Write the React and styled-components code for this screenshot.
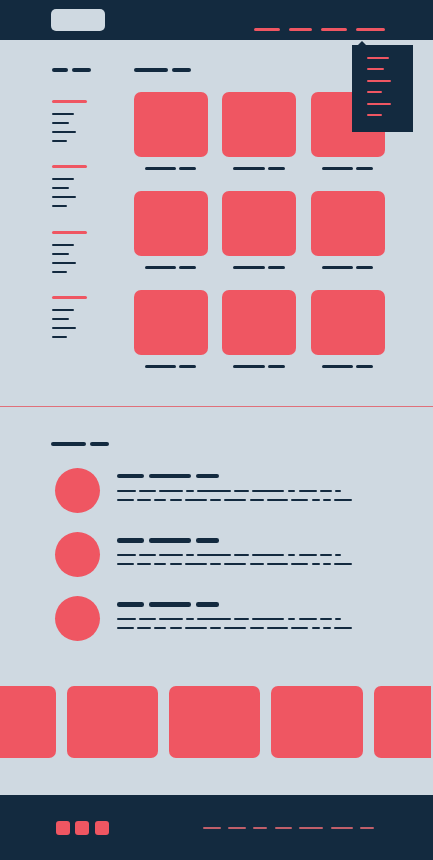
import React from 'react';
import styled, { createGlobalStyle } from 'styled-components';

// Palette
const NAVY = '#132a3f';
const CORAL = '#ef5662';
const PAPER = '#cfd9e1';
const MUTED = '#c05f6a';

const GlobalStyle = createGlobalStyle`
  html, body {
    margin: 0;
    padding: 0;
    background: ${PAPER};
  }
  body {
    font-family: "Liberation Sans", Arial, sans-serif;
  }
`;

const Page = styled.div`
  position: relative;
  width: 433px;
  height: 860px;
  overflow: hidden;
  background: ${PAPER};
`;

// A placeholder stroke: every "text" in this wireframe is one of these
const Bar = styled.span`
  display: block;
  flex: none;
  width: ${({ $w }) => $w}px;
  height: ${({ $h = 2 }) => $h}px;
  border-radius: ${({ $h = 2 }) => $h / 2}px;
  background: ${({ $color = NAVY }) => $color};
`;

const Dashes = styled.div`
  display: flex;
  gap: ${({ $gap = 4 }) => $gap}px;
`;

// Header
const Header = styled.header`
  display: flex;
  align-items: flex-start;
  box-sizing: border-box;
  height: 40px;
  padding: 0 48px 0 51px;
  background: ${NAVY};
`;

const Logo = styled.div`
  width: 54px;
  height: 22px;
  margin-top: 9px;
  border-radius: 5px;
  background: ${PAPER};
`;

const Nav = styled.nav`
  display: flex;
  gap: 9px;
  margin-top: 28px;
  margin-left: auto;
`;

const Dropdown = styled.div`
  position: absolute;
  top: 45px;
  left: 352px;
  box-sizing: border-box;
  width: 61px;
  height: 87px;
  padding: 11.7px 0 0 15px;
  display: flex;
  flex-direction: column;
  gap: 9.5px;
  background: ${NAVY};

  &::before {
    content: '';
    position: absolute;
    top: -4px;
    left: 6px;
    border: 4px solid transparent;
    border-top: 0;
    border-bottom-color: ${NAVY};
  }
`;

// Catalog
const Catalog = styled.section`
  display: flex;
  box-sizing: border-box;
  height: 366px;
  padding: 28px 0 0 52px;
`;

const Sidebar = styled.aside`
  width: 81.7px;
  display: flex;
  flex-direction: column;
`;

const FilterList = styled.div`
  display: flex;
  flex-direction: column;
  gap: 23.5px;
  margin-top: 27.8px;
`;

const FilterGroup = styled.div`
  display: flex;
  flex-direction: column;
  gap: 7px;

  & > :first-child {
    margin-bottom: 3px;
  }
`;

const Main = styled.div`
  display: flex;
  flex-direction: column;
`;

const Grid = styled.div`
  display: grid;
  grid-template-columns: repeat(3, 74px);
  column-gap: 14.5px;
  row-gap: 21.3px;
  margin-top: 19.7px;
`;

const Card = styled.div`
  height: 65px;
  border-radius: 7px;
  background: ${CORAL};
`;

const Caption = styled(Dashes)`
  justify-content: center;
  margin-top: 10px;
`;

const Divider = styled.hr`
  margin: 0;
  height: 1px;
  border: 0;
  background: #e0707a;
`;

// Reviews
const Reviews = styled.section`
  box-sizing: border-box;
  height: 279px;
  padding: 34.7px 0 0 51px;
`;

const ReviewList = styled.div`
  display: flex;
  flex-direction: column;
  gap: 19.2px;
  margin-top: 22px;
  padding-left: 3.7px;
`;

const Review = styled.div`
  display: flex;
  gap: 17px;
`;

const Avatar = styled.div`
  width: 45px;
  height: 45px;
  border-radius: 50%;
  background: ${CORAL};
`;

const ReviewBody = styled.div`
  display: flex;
  flex-direction: column;
  padding-top: 6.3px;
`;

const TextLine = styled(Dashes)`
  margin-top: ${({ $top }) => $top}px;
`;

// Carousel
const Strip = styled.div`
  width: 431px;
  height: 109px;
  overflow: hidden;
`;

const Track = styled.div`
  display: flex;
  gap: 11px;
  margin-left: -35.6px;
`;

const Slide = styled.div`
  flex: none;
  width: 91.3px;
  height: 71.7px;
  border-radius: 7px;
  background: ${CORAL};
`;

// Footer
const Footer = styled.footer`
  display: flex;
  align-items: center;
  box-sizing: border-box;
  height: 65px;
  padding-left: 56px;
  background: ${NAVY};
`;

const Squares = styled.div`
  display: flex;
  gap: 5.3px;
`;

const Square = styled.div`
  width: 14px;
  height: 14px;
  border-radius: 3px;
  background: ${CORAL};
`;

const FooterLinks = styled(Dashes)`
  margin-left: 94px;
`;

const navItems = [26, 23, 26, 29];
const menuItems = [22, 17, 24, 15, 24, 15];
const filterLines = [22.3, 17.3, 24, 15.3];
const lineOne = [19.3, 16.7, 23.3, 8, 33.7, 15, 32, 7.7, 18.3, 11.3, 6.3];
const lineTwo = [17, 14, 12, 12, 22, 11, 22, 14, 21, 17, 8, 8, 18];
const footerLinks = [18.6, 17.6, 14, 17.3, 24, 22.6, 13.3];

function App() {
  return (
    <Page>
      <GlobalStyle />
      <Header>
        <Logo />
        <Nav>
          {navItems.map((w, i) => <Bar key={i} $w={w} $h={3} $color={CORAL} />)}
        </Nav>
      </Header>
      <Dropdown>
        {menuItems.map((w, i) => <Bar key={i} $w={w} $color={CORAL} />)}
      </Dropdown>

      <Catalog>
        <Sidebar>
          <Dashes>
            <Bar $w={16} $h={4} />
            <Bar $w={19} $h={4} />
          </Dashes>
          <FilterList>
            {[0, 1, 2, 3].map((g) => (
              <FilterGroup key={g}>
                <Bar $w={34.7} $h={3} $color={CORAL} />
                {filterLines.map((w, i) => <Bar key={i} $w={w} />)}
              </FilterGroup>
            ))}
          </FilterList>
        </Sidebar>
        <Main>
          <Dashes>
            <Bar $w={34} $h={4} />
            <Bar $w={19} $h={4} />
          </Dashes>
          <Grid>
            {Array.from({ length: 9 }).map((_, i) => (
              <div key={i}>
                <Card />
                <Caption $gap={3.3}>
                  <Bar $w={31.3} $h={3} />
                  <Bar $w={17} $h={3} />
                </Caption>
              </div>
            ))}
          </Grid>
        </Main>
      </Catalog>

      <Divider />

      <Reviews>
        <Dashes>
          <Bar $w={35} $h={4} />
          <Bar $w={19} $h={4} />
        </Dashes>
        <ReviewList>
          {[0, 1, 2].map((r) => (
            <Review key={r}>
              <Avatar />
              <ReviewBody>
                <Dashes $gap={5}>
                  <Bar $w={27.6} $h={4.5} />
                  <Bar $w={41.7} $h={4.5} />
                  <Bar $w={23} $h={4.5} />
                </Dashes>
                <TextLine $gap={3.3} $top={11.2}>
                  {lineOne.map((w, i) => <Bar key={i} $w={w} />)}
                </TextLine>
                <TextLine $gap={3.3} $top={7.3}>
                  {lineTwo.map((w, i) => <Bar key={i} $w={w} />)}
                </TextLine>
              </ReviewBody>
            </Review>
          ))}
        </ReviewList>
      </Reviews>

      <Strip>
        <Track>
          {[0, 1, 2, 3, 4].map((i) => <Slide key={i} />)}
        </Track>
      </Strip>

      <Footer>
        <Squares>
          <Square />
          <Square />
          <Square />
        </Squares>
        <FooterLinks $gap={7.3}>
          {footerLinks.map((w, i) => <Bar key={i} $w={w} $color={MUTED} />)}
        </FooterLinks>
      </Footer>
    </Page>
  );
}

export default App;
